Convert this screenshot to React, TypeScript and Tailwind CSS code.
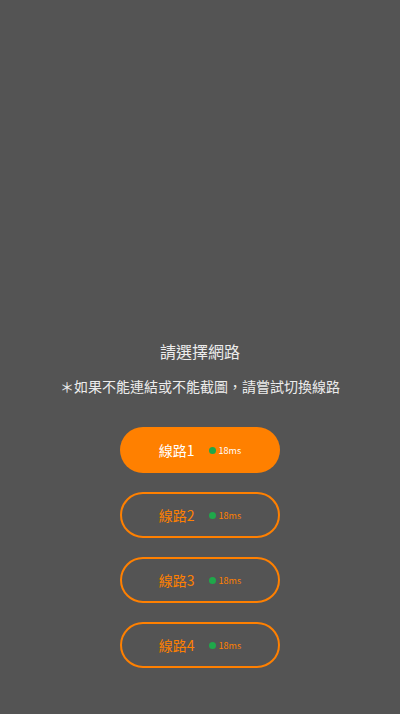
import React from "react";

const lines = [
  { name: "線路1", ping: "18ms", active: true },
  { name: "線路2", ping: "18ms", active: false },
  { name: "線路3", ping: "18ms", active: false },
  { name: "線路4", ping: "18ms", active: false },
];

const font = { fontFamily: '"Noto Sans CJK TC", "Noto Sans", sans-serif' };

export default function App() {
  return (
    <div
      className="min-h-screen w-full bg-[#545454] flex flex-col items-center justify-end pb-[46px]"
      style={font}
    >
      <div className="text-[16px] leading-[24px] text-[#ececec]">請選擇網路</div>
      <div className="mt-[13px] text-[14px] leading-[20px] text-[#ececec]">
        ＊如果不能連結或不能截圖，請嘗試切換線路
      </div>
      <div className="mt-[31px] flex flex-col gap-[19px]">
        {lines.map((l) => (
          <button
            key={l.name}
            className={
              l.active
                ? "w-[160px] h-[46px] rounded-full bg-[#ff8000] text-white flex items-center justify-center"
                : "w-[160px] h-[46px] rounded-full border-2 border-[#ff8000] text-[#ff8000] flex items-center justify-center"
            }
          >
            <span className="text-[14px] leading-none">{l.name}</span>
            <span className="ml-[14px] w-[7px] h-[7px] rounded-full bg-[#1fa84a]" />
            <span className="ml-[3px] text-[9px] leading-none">{l.ping}</span>
          </button>
        ))}
      </div>
    </div>
  );
}
